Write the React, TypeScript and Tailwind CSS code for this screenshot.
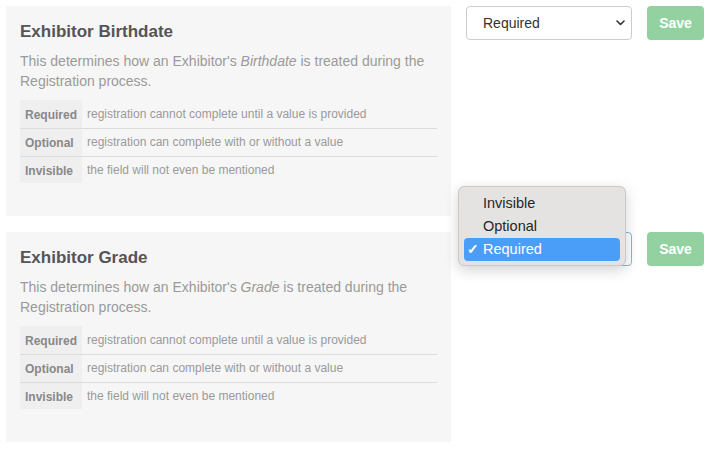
import React from 'react';

const levels = [
  { name: 'Required', text: 'registration cannot complete until a value is provided' },
  { name: 'Optional', text: 'registration can complete with or without a value' },
  { name: 'Invisible', text: 'the field will not even be mentioned' },
];

const Chevron = () => (
  <svg width="9" height="6" viewBox="0 0 9 6" className="text-[#333]">
    <path d="M1 1l3.5 3.5L8 1" fill="none" stroke="currentColor" strokeWidth="1.6" strokeLinecap="round" strokeLinejoin="round" />
  </svg>
);

const OptionMenu = () => (
  <div className="absolute left-[-8px] top-[-46px] z-10 w-[168px] rounded-[6px] border border-[#cbc9c7] bg-[#e5e3e1] px-[5px] pt-[5px] pb-[4px] text-[14.5px] text-[#262626] shadow-[0_4px_14px_rgba(0,0,0,0.18)]">
    <div className="flex h-[23px] items-center pl-[19px]">Invisible</div>
    <div className="flex h-[23px] items-center pl-[19px]">Optional</div>
    <div className="relative flex h-[23px] items-center rounded-[4px] bg-[#4a9ef8] pl-[19px] text-white">
      <span className="absolute left-[3px] top-[1px] text-[14px] font-bold">✓</span>
      Required
    </div>
  </div>
);

interface FieldRowProps {
  title: string;
  field: string;
  open?: boolean;
}

const FieldRow = ({ title, field, open }: FieldRowProps) => (
  <div className="flex items-start gap-[15px]">
    <div className="h-[210px] w-[445px] bg-[#f6f6f6] px-[14px] pt-[16px]">
      <h2 className="text-[17px] leading-[20px] font-bold text-[#555]">{title}</h2>
      <p className="mt-[9px] text-[14px] leading-[20px] text-[#9a9a9a]">
        This determines how an Exhibitor's <em>{field}</em> is treated during the Registration process.
      </p>
      <table className="mt-[9px] w-full border-collapse text-[12px]">
        <tbody>
          {levels.map((l, i) => (
            <tr key={l.name} className={i < levels.length - 1 ? 'h-[28px] border-b border-[#dcdcdc]' : 'h-[27px]'}>
              <th className="w-[62px] bg-[#efefef] pl-[5px] pt-[2px] text-left font-bold text-[#888]">{l.name}</th>
              <td className="pl-[5px] text-[#9a9a9a]">{l.text}</td>
            </tr>
          ))}
        </tbody>
      </table>
    </div>
    <div className="flex items-center gap-[15px]">
      <div className="relative">
        <div
          className={
            'flex h-[34px] w-[166px] items-center justify-between rounded-[4px] border bg-white pr-[6px] pl-[16px] text-[14px] text-[#333] ' +
            (open ? 'border-[#7db9ee]' : 'border-[#cccccc]')
          }
        >
          <span>Required</span>
          <Chevron />
        </div>
        {open && <OptionMenu />}
      </div>
      <button type="button" className="h-[34px] w-[57px] rounded-[4px] bg-[#93d2a0] text-[14px] font-bold text-white">
        Save
      </button>
    </div>
  </div>
);

export default function App() {
  return (
    <div className="flex min-h-screen flex-col gap-[16px] bg-white p-[6px] font-['Liberation_Sans',Arial,sans-serif]">
      <FieldRow title="Exhibitor Birthdate" field="Birthdate" />
      <FieldRow title="Exhibitor Grade" field="Grade" open />
    </div>
  );
}
